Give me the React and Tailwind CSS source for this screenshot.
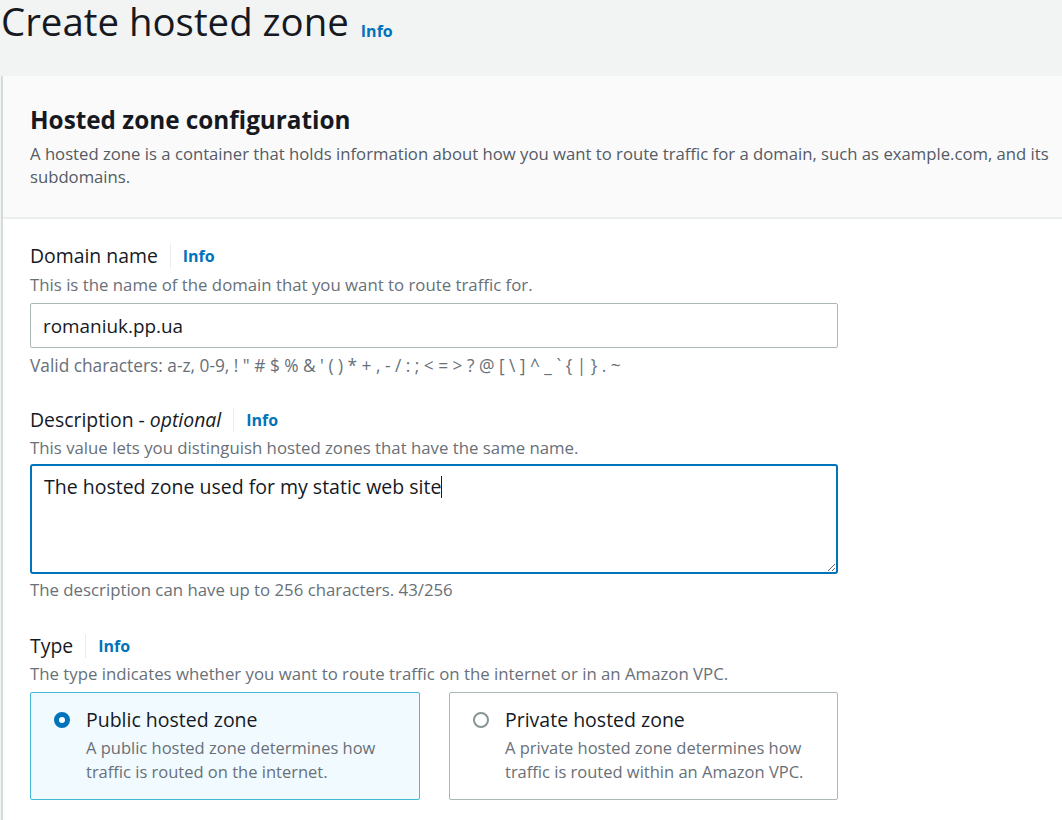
import React, { useState } from "react";

function Info() {
  return <span className="text-[16px] font-bold text-[#0073bb] leading-none">Info</span>;
}

function FieldLabel({ children }) {
  return (
    <div className="flex items-center h-[26px]">
      <span className="text-[19.4px] text-[#16191f] leading-none">{children}</span>
      <span className="ml-[12px] mr-[12px] h-[24px] w-px bg-[#eaeded]"></span>
      <Info />
    </div>
  );
}

function RadioCard({ selected, title, desc }) {
  return (
    <div
      className={
        selected
          ? "w-[390px] h-[108px] rounded-[2px] border border-[#44b9d6] bg-[#f1faff] pl-[23px] pt-[12px]"
          : "w-[389px] h-[108px] rounded-[2px] border border-[#aab7b8] bg-white pl-[23px] pt-[12px]"
      }
    >
      <div className="flex items-center gap-[16px]">
        {selected ? (
          <span className="w-[16px] h-[16px] rounded-full border-[5px] border-[#0073bb] bg-white shrink-0"></span>
        ) : (
          <span className="w-[16px] h-[16px] rounded-full border-2 border-[#879596] bg-white shrink-0"></span>
        )}
        <span className="text-[19.5px] text-[#16191f]">{title}</span>
      </div>
      <p className="ml-[32px] mt-[2px] text-[16.5px] leading-[24px] text-[#687078]">{desc}</p>
    </div>
  );
}

export default function App() {
  const [domain, setDomain] = useState("romaniuk.pp.ua");
  const [desc, setDesc] = useState("The hosted zone used for my static web site");

  return (
    <div className="min-h-screen bg-[#f2f3f3] font-['Open_Sans',sans-serif] overflow-hidden">
      <div className="h-[76px] flex items-start">
        <h1 className="text-[38.4px] leading-[50px] text-[#16191f] ml-[1px] mt-[-4px]">Create hosted zone</h1>
        <span className="ml-[12px] mt-[19px]">
          <Info />
        </span>
      </div>

      <div className="ml-[1px] border-l-2 border-[#d5dbdb] bg-white min-h-[744px]">
        <div className="bg-[#fafafa] border-b-2 border-[#eaeded] pl-[27px] pt-[28px] pb-[29px]">
          <h2 className="text-[24.3px] font-bold text-[#16191f] leading-[32px]">Hosted zone configuration</h2>
          <p className="text-[16.7px] leading-[23px] text-[#545b64] mt-[6px]">
            A hosted zone is a container that holds information about how you want to route traffic for a domain, such as example.com, and its subdomains.
          </p>
        </div>

        <div className="pl-[27px] pt-[24px]">
          <FieldLabel>Domain name</FieldLabel>
          <p className="text-[16.8px] leading-[22px] text-[#687078] mt-[5px]">
            This is the name of the domain that you want to route traffic for.
          </p>
          <input
            value={domain}
            onChange={(e) => setDomain(e.target.value)}
            className="mt-[7px] w-[808px] h-[45px] border border-[#aab7b8] rounded-[2px] px-[12px] text-[18.9px] text-[#16191f] bg-white outline-none"
          />
          <p className="text-[17.3px] leading-[22px] text-[#687078] mt-[7px]">
            Valid characters: a-z, 0-9, ! " # $ % &amp; ' ( ) * + , - / : ; &lt; = &gt; ? @ [ \ ] ^ _ ` {"{"} | {"}"} . ~
          </p>

          <div className="mt-[30px]">
            <FieldLabel>
              Description - <i>optional</i>
            </FieldLabel>
          </div>
          <p className="text-[16.8px] leading-[22px] text-[#687078] mt-[4px]">
            This value lets you distinguish hosted zones that have the same name.
          </p>
          <div className="relative mt-[5px] w-[808px]">
            <textarea
              value={desc}
              onChange={(e) => setDesc(e.target.value)}
              className="block w-[808px] h-[110px] border-2 border-[#0073bb] rounded-[3px] px-[12px] py-[8px] text-[19.5px] leading-[26px] text-[#16191f] bg-white outline-none resize-y"
            />
            {/* text cursor shown in the screenshot */}
            <span className="absolute left-[411px] top-[12px] w-px h-[22px] bg-[#16191f]"></span>
          </div>
          <p className="text-[16.8px] leading-[22px] text-[#687078] mt-[5px]">
            The description can have up to 256 characters. 43/256
          </p>

          <div className="mt-[32px]">
            <FieldLabel>Type</FieldLabel>
          </div>
          <p className="text-[16.8px] leading-[22px] text-[#687078] mt-[4px]">
            The type indicates whether you want to route traffic on the internet or in an Amazon VPC.
          </p>
          <div className="flex gap-[29px] mt-[7px]">
            <RadioCard
              selected
              title="Public hosted zone"
              desc="A public hosted zone determines how traffic is routed on the internet."
            />
            <RadioCard
              title="Private hosted zone"
              desc="A private hosted zone determines how traffic is routed within an Amazon VPC."
            />
          </div>
        </div>
      </div>
    </div>
  );
}
